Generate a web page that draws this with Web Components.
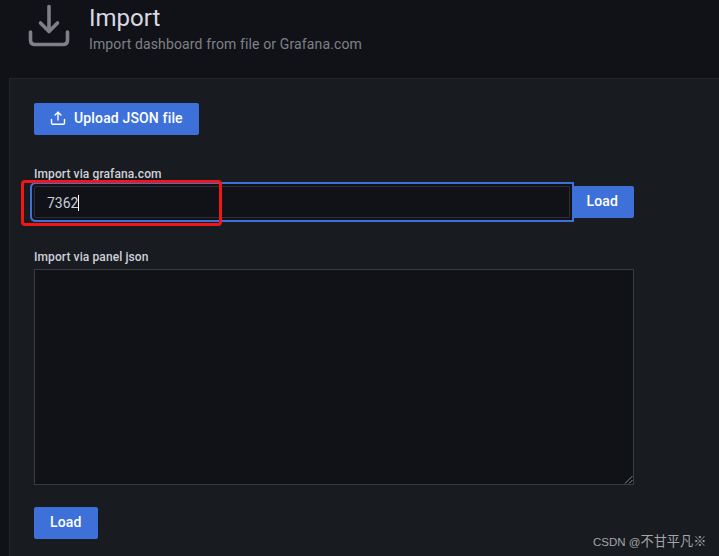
<!DOCTYPE html>
<html>
<head>
<meta charset="utf-8">
<title>Import</title>
<style>
    html, body{ margin:0; height:100%; overflow:hidden; background:#111217; }
    body{ font-family:Roboto, "Liberation Sans", sans-serif; color:#ccccdc; }
    #app{ position:relative; display:block; height:556px; overflow:hidden; }
</style>
</head>
<body>
<div id="app">
    <gf-header title="Import" sub="Import dashboard from file or Grafana.com"></gf-header>
    <gf-panel>
        <gf-button icon>Upload JSON file</gf-button>
        <gf-field label="Import via grafana.com" style="margin-top:32px">
            <gf-input value="7362"></gf-input>
        </gf-field>
        <gf-field label="Import via panel json" style="margin-top:32px">
            <gf-textarea></gf-textarea>
        </gf-field>
        <gf-button style="margin-top:22px">Load</gf-button>
    </gf-panel>
    <red-mark></red-mark>
    <csdn-mark><span style="font-size:11.5px">CSDN @</span>不甘平凡※</csdn-mark>
</div>

<script>
class GfHeader extends HTMLElement{
    constructor(){
        super();
        this.attachShadow({mode:'open'}).innerHTML = `
        <style>
            :host{ display:flex; height:78px; box-sizing:border-box; padding:3px 0 0 27px; gap:18px; }
            svg{ width:44px; height:44px; flex:none; }
            .text{ display:flex; flex-direction:column; }
            h1{ margin:0; font:400 24px/30px Roboto, sans-serif; color:#d8d9e3; }
            p{ margin:1px 0 0; font:400 14px/20px Roboto, sans-serif; color:#7f8188; letter-spacing:.13px; }
        </style>
        <svg viewBox="0 0 44 44" fill="none" stroke="#7e7f87" stroke-width="3.6" stroke-linecap="round" stroke-linejoin="round">
            <path d="M22 3.5V28"/>
            <path d="M13.5 20L22 28.500L30.500 20"/>
            <path d="M3.500 29V37Q3.500 41.500 8 41.500H36Q40.500 41.500 40.500 37V29"/>
        </svg>
        <div class="text"><h1></h1><p></p></div>`;
        this.shadowRoot.querySelector('h1').textContent = this.getAttribute('title');
        this.shadowRoot.querySelector('p').textContent = this.getAttribute('sub');
    }
}
customElements.define('gf-header', GfHeader);

class GfPanel extends HTMLElement{
    constructor(){
        super();
        this.attachShadow({mode:'open'}).innerHTML = `
        <style>
            :host{ display:block; box-sizing:border-box; margin-left:9px; height:478px;
                   padding:24px 24px 0; background:#181b1f;
                   border:1px solid #22252a; border-right:0; border-bottom:0; }
            .col{ display:flex; flex-direction:column; align-items:flex-start; width:600px; }
        </style>
        <div class="col"><slot></slot></div>`;
    }
}
customElements.define('gf-panel', GfPanel);

class GfButton extends HTMLElement{
    constructor(){
        super();
        const hasIcon = this.hasAttribute('icon');
        this.attachShadow({mode:'open'}).innerHTML = `
        <style>
            :host{ display:inline-flex; align-items:center; height:32px; box-sizing:border-box;
                   padding:0 16px 2px; gap:8px; background:#3d71d9; color:#fff; border-radius:2px;
                   font:500 14px/20px Roboto, sans-serif; letter-spacing:.15px; white-space:nowrap; flex:none; }
            svg{ width:16px; height:16px; flex:none; }
        </style>
        ${hasIcon ? `<svg viewBox="0 0 16 16" fill="none" stroke="#fff" stroke-width="1.4" stroke-linecap="round" stroke-linejoin="round">
            <path d="M8 2.200V10"/><path d="M5 5L8 2.200L11 5"/>
            <path d="M1.500 9.500V13Q1.500 14.300 2.800 14.300H13.200Q14.500 14.300 14.500 13V9.500"/></svg>` : ''}
        <slot></slot>`;
    }
}
customElements.define('gf-button', GfButton);

class GfField extends HTMLElement{
    constructor(){
        super();
        this.attachShadow({mode:'open'}).innerHTML = `
        <style>
            :host{ display:block; width:600px; }
            label{ display:block; font:500 12px/14px Roboto, sans-serif; color:#d0d0dc; margin-bottom:5px; letter-spacing:.1px; }
        </style>
        <label></label><slot></slot>`;
        this.shadowRoot.querySelector('label').textContent = this.getAttribute('label');
    }
}
customElements.define('gf-field', GfField);

class GfInput extends HTMLElement{
    constructor(){
        super();
        this.attachShadow({mode:'open'}).innerHTML = `
        <style>
            :host{ display:flex; height:32px; }
            .box{ flex:1; position:relative; z-index:1; box-sizing:border-box; display:flex; align-items:center; padding:1px 0 0 12px;
                  background:#111217; border:1px solid #2c2e33; border-radius:2px 0 0 2px;
                  box-shadow:0 0 0 2px #111217, 0 0 0 4px #3d71d9; color:#ccccdc;
                  font:400 14px/20px Roboto, sans-serif; }
            .caret{ width:1px; height:16px; background:#fff; }
        </style>
        <div class="box"><span></span><i class="caret"></i></div>
        <gf-button>Load</gf-button>`;
        this.shadowRoot.querySelector('span').textContent = this.getAttribute('value');
    }
}
customElements.define('gf-input', GfInput);

class GfTextarea extends HTMLElement{
    constructor(){
        super();
        this.attachShadow({mode:'open'}).innerHTML = `
        <style>
            :host{ display:block; position:relative; box-sizing:border-box; height:216px;
                   background:#111217; border:1px solid #3a3c41; }
            svg{ position:absolute; right:0; bottom:0; width:9px; height:9px; }
        </style>
        <svg viewBox="0 0 9 9" stroke="#8a8a8a" stroke-width="1" fill="none"><path d="M1 8.500L8.500 1M5 8.500L8.500 5"/></svg>`;
    }
}
customElements.define('gf-textarea', GfTextarea);

// hand drawn annotation on top of the screenshot
class RedMark extends HTMLElement{
    constructor(){
        super();
        this.attachShadow({mode:'open'}).innerHTML = `
        <style>
            :host{ position:absolute; z-index:2; left:21px; top:180px; width:201px; height:46px; box-sizing:border-box;
                   border:3px solid #f21616; border-radius:4px; }
        </style>`;
    }
}
customElements.define('red-mark', RedMark);

class CsdnMark extends HTMLElement{
    constructor(){
        super();
        this.attachShadow({mode:'open'}).innerHTML = `
        <style>
            :host{ position:absolute; z-index:2; left:593px; top:533px; color:#a3a5a8;
                   font:400 13.2px/18px "Liberation Sans", "Noto Sans CJK SC", sans-serif; white-space:nowrap; }
        </style><slot></slot>`;
    }
}
customElements.define('csdn-mark', CsdnMark);
</script>
</body>
</html>
